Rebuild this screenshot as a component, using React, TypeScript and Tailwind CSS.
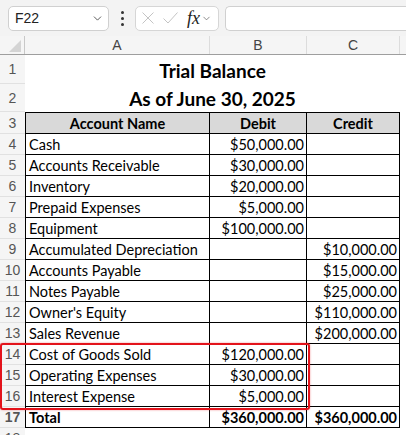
import React from 'react';
import { ChevronDown } from 'lucide-react';

type Row = { n: number; name: string; debit?: string; credit?: string; bold?: boolean };

const rows: Row[] = [
    { n: 4, name: 'Cash', debit: '$50,000.00' },
    { n: 5, name: 'Accounts Receivable', debit: '$30,000.00' },
    { n: 6, name: 'Inventory', debit: '$20,000.00' },
    { n: 7, name: 'Prepaid Expenses', debit: '$5,000.00' },
    { n: 8, name: 'Equipment', debit: '$100,000.00' },
    { n: 9, name: 'Accumulated Depreciation', credit: '$10,000.00' },
    { n: 10, name: 'Accounts Payable', credit: '$15,000.00' },
    { n: 11, name: 'Notes Payable', credit: '$25,000.00' },
    { n: 12, name: "Owner's Equity", credit: '$110,000.00' },
    { n: 13, name: 'Sales Revenue', credit: '$200,000.00' },
    { n: 14, name: 'Cost of Goods Sold', debit: '$120,000.00' },
    { n: 15, name: 'Operating Expenses', debit: '$30,000.00' },
    { n: 16, name: 'Interest Expense', debit: '$5,000.00' },
    { n: 17, name: 'Total', debit: '$360,000.00', credit: '$360,000.00', bold: true },
];

const RowHead: React.FC<{ n: number }> = ({ n }) => (
    <div className="w-[25px] shrink-0 flex items-center justify-center pt-[1px] bg-[#f5f5f5] border-b border-[#e1e1e1] text-[#555] text-[14px] font-['Liberation_Sans',sans-serif]">
        {n}
    </div>
);

const App: React.FC = () => {
    return (
        <div className="w-[406px] h-[435px] overflow-hidden bg-white flex flex-col font-['Lato',sans-serif] text-black">
            {/* formula bar */}
            <div className="h-[36px] shrink-0 bg-[#f3f3f3] flex items-center pl-[8px] gap-[6px]">
                <div className="w-[101px] h-[25px] bg-white border border-[#d0d0d0] rounded-[5px] flex items-center justify-between pl-[6px] pr-[4px]">
                    <span className="text-[14px] text-[#222] font-['Liberation_Sans',sans-serif]">F22</span>
                    <ChevronDown className="w-[13px] h-[13px] text-[#444]" strokeWidth={1.6} />
                </div>
                <div className="w-[14px] flex flex-col items-center gap-[3px]">
                    <span className="w-[3px] h-[3px] rounded-full bg-[#333]" />
                    <span className="w-[3px] h-[3px] rounded-full bg-[#333]" />
                    <span className="w-[3px] h-[3px] rounded-full bg-[#333]" />
                </div>
                <div className="w-[84px] h-[25px] bg-white border border-[#d6d6d6] rounded-[5px] flex items-center pl-[6px]">
                    <svg width="12" height="12" viewBox="0 0 12 12" className="shrink-0">
                        <path d="M0.5 0.5 L11.5 11.5 M11.5 0.5 L0.5 11.5" stroke="#c4c4c4" strokeWidth="1" fill="none" />
                    </svg>
                    <svg width="15" height="12" viewBox="0 0 15 12" className="shrink-0 ml-[9px]">
                        <path d="M0.5 6.5 L5 11 L14.5 0.5" stroke="#c4c4c4" strokeWidth="1" fill="none" />
                    </svg>
                    <span className="ml-[9px] text-[18px] italic font-['Liberation_Serif',serif] text-[#222] leading-none">fx</span>
                    <ChevronDown className="w-[11px] h-[11px] text-[#666] ml-[1px]" strokeWidth={1.6} />
                </div>
                <div className="flex-1 h-[25px] bg-white border border-[#d0d0d0] rounded-l-[5px] border-r-0" />
            </div>

            {/* column headers */}
            <div className="h-[19px] shrink-0 flex bg-[#f5f5f5] border-b border-[#9e9e9e] text-[14px] text-[#444] font-['Liberation_Sans',sans-serif]">
                <div className="w-[25px] shrink-0 border-r border-[#c8c8c8] relative">
                    <svg className="absolute right-[3px] bottom-[2px]" width="12" height="12" viewBox="0 0 12 12">
                        <polygon points="12,0 12,12 0,12" fill="#d4d4d4" />
                    </svg>
                </div>
                <div className="w-[185px] shrink-0 flex items-center justify-center border-r border-[#dcdcdc]">A</div>
                <div className="w-[97px] shrink-0 flex items-center justify-center border-r border-[#dcdcdc]">B</div>
                <div className="w-[93px] shrink-0 flex items-center justify-center border-r border-[#dcdcdc]">C</div>
                <div className="flex-1" />
            </div>

            {/* sheet */}
            <div className="relative flex-1 flex flex-col">
                <div className="h-[29px] shrink-0 flex">
                    <RowHead n={1} />
                    <div className="w-[375px] flex items-end justify-center pb-[1px] text-[19px] leading-[24px] font-bold">Trial Balance</div>
                </div>
                <div className="h-[28px] shrink-0 flex">
                    <RowHead n={2} />
                    <div className="w-[375px] flex items-end justify-center pb-[1px] text-[19px] leading-[24px] font-bold">As of June 30, 2025</div>
                </div>
                <div className="h-[22px] shrink-0 flex">
                    <RowHead n={3} />
                    <div className="w-[185px] shrink-0 bg-[#d9d9d9] border border-black flex items-center justify-center pt-[2px] text-[14.5px] font-bold">Account Name</div>
                    <div className="w-[97px] shrink-0 bg-[#d9d9d9] border-y border-r border-black flex items-center justify-center pt-[2px] text-[14.5px] font-bold">Debit</div>
                    <div className="w-[93px] shrink-0 bg-[#d9d9d9] border-y border-r border-black flex items-center justify-center pt-[2px] text-[14.5px] font-bold">Credit</div>
                </div>
                {rows.map((r) => (
                    <div key={r.n} className={`h-[21px] shrink-0 flex text-[14.5px] ${r.bold ? 'font-bold' : ''}`}>
                        <RowHead n={r.n} />
                        <div className="w-[185px] shrink-0 border-x border-b border-black flex items-center pt-[2px] pl-[3px] whitespace-nowrap">{r.name}</div>
                        <div className="w-[97px] shrink-0 border-r border-b border-black flex items-center justify-end pt-[2px] pr-[2px] whitespace-nowrap">{r.debit}</div>
                        <div className="w-[93px] shrink-0 border-r border-b border-black flex items-center justify-end pt-[2px] pr-[2px] whitespace-nowrap">{r.credit}</div>
                    </div>
                ))}
                <div className="h-[21px] shrink-0 flex">
                    <RowHead n={18} />
                </div>

                {/* highlight */}
                <div className="absolute left-0 top-[288px] w-[310px] h-[67px] border-2 border-[#e3131b] rounded-[3px] shadow-[0_0_2px_rgba(227,19,27,0.5)] pointer-events-none" />
            </div>
        </div>
    );
};

export default App;
